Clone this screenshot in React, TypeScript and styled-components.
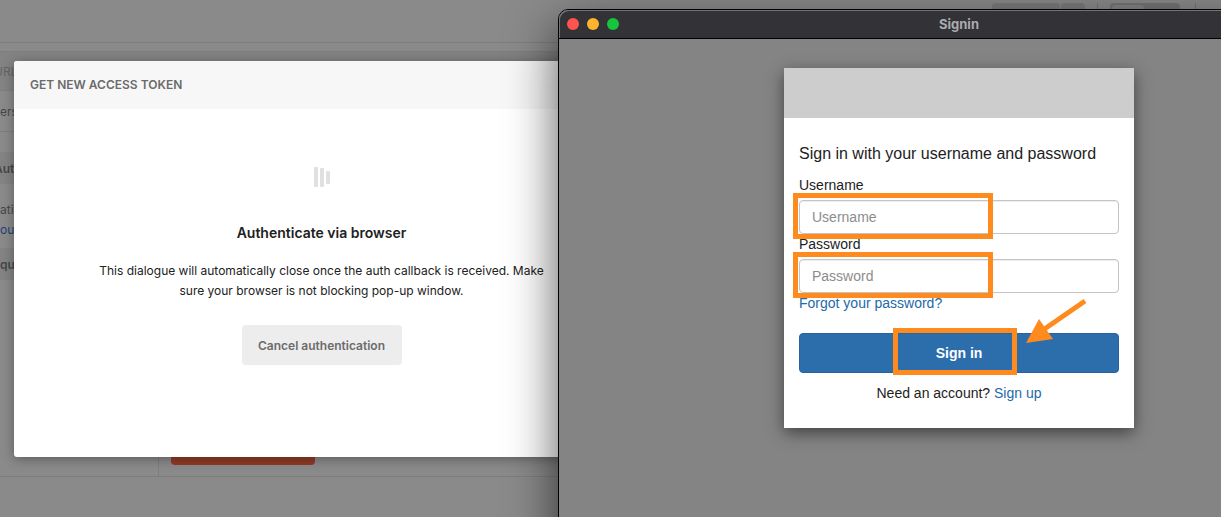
import React from "react";
import styled, { createGlobalStyle } from "styled-components";

const inter = `Inter, "Liberation Sans", sans-serif`;
const arial = `"Liberation Sans", Arial, sans-serif`;
const line = "#7e7e7e";
const marker = "#ff8a1e";

const GlobalStyle = createGlobalStyle`
  *, *::before, *::after { box-sizing: border-box; }
  body { margin: 0; background: #8a8a8a; }
  button, input { font: inherit; margin: 0; }
`;

const Desktop = styled.div`
  position: relative;
  display: flex;
  flex-direction: column;
  min-height: 100vh;
  overflow: hidden;
  font-family: ${inter};
  font-size: 12px;
  background: #8a8a8a;
`;

/* Dimmed application behind the dialog */
const TopBar = styled.header`
  display: flex;
  justify-content: flex-end;
  gap: 12px;
  height: 43px;
  padding: 3px 25px 0 0;
  border-bottom: 1px solid ${line};
`;

const SplitButton = styled.div`
  display: flex;
  gap: 1px;
  height: 28px;
`;

const Segment = styled.span<{ $width: number }>`
  width: ${(p) => p.$width}px;
  border-radius: 4px;
  background: #7b7b7b;
`;

const Toggle = styled.div`
  width: 70px;
  height: 28px;
  margin-right: 3px;
  padding: 2px;
  border-radius: 4px;
  background: #757575;
`;

const ToggleThumb = styled.div`
  width: 32px;
  height: 24px;
  border-radius: 3px;
  background: #838383;
`;

const Divider = styled.span`
  width: 1px;
  height: 28px;
  background: #757575;
`;

const Row = styled.div<{ $height: number; $shade?: boolean; $line?: boolean }>`
  display: flex;
  align-items: center;
  height: ${(p) => p.$height}px;
  background: ${(p) => (p.$shade ? "#838383" : "transparent")};
  border-bottom: ${(p) => (p.$line ? `1px solid ${line}` : "none")};
`;

const Clipped = styled.span<{ $color?: string; $bold?: boolean; $cut?: boolean }>`
  margin-left: ${(p) => (p.$cut ? "-6px" : "0")};
  white-space: nowrap;
  color: ${(p) => p.$color ?? "#474747"};
  font-weight: ${(p) => (p.$bold ? 600 : 400)};
`;

const Columns = styled.div`
  display: flex;
  height: 345px;
  border-bottom: 1px solid ${line};
`;

const Side = styled.div`
  width: 159px;
  padding-top: 20px;
  border-right: 1px solid ${line};
`;

const Note = styled.div`
  display: flex;
  flex-direction: column;
  height: 64px;
  padding-top: 16px;
  line-height: 20px;
`;

const Main = styled.div`
  flex: 1;
  display: flex;
  align-items: flex-end;
  padding: 0 12px 11px;
`;

const OrangeBlock = styled.div`
  width: 144px;
  height: 32px;
  border-radius: 4px;
  background: #8e3c26;
`;

/* Token dialog */
const Dialog = styled.section`
  position: absolute;
  top: 61px;
  left: 14px;
  width: 615px;
  height: 396px;
  border-radius: 3px;
  background: #fff;
  box-shadow: 0 2px 12px rgba(0, 0, 0, 0.35);
`;

const DialogHead = styled.h1`
  height: 48px;
  margin: 0;
  padding: 0 16px;
  border-radius: 3px 3px 0 0;
  background: #f7f7f7;
  color: #6b6b6b;
  font-size: 12px;
  font-weight: 600;
  line-height: 48px;
`;

const DialogBody = styled.div`
  display: flex;
  flex-direction: column;
  align-items: center;
  padding-top: 56px;
  color: #212121;
  text-align: center;
`;

const Loader = styled.svg`
  display: block;
  width: 18px;
  height: 24px;
`;

const DialogTitle = styled.h2`
  margin: 34px 0 18px;
  font-size: 14px;
  font-weight: 600;
  line-height: 20px;
`;

const Message = styled.p`
  width: 460px;
  margin: 0 0 24px;
  line-height: 20px;
`;

const CancelButton = styled.button`
  width: 160px;
  height: 40px;
  border: 0;
  border-radius: 4px;
  background: #ededed;
  color: #6b6b6b;
  font-weight: 600;
`;

/* Sign-in window */
const Window = styled.section`
  position: absolute;
  top: 9px;
  bottom: -80px;
  left: 558px;
  width: 802px;
  border: 1px solid #000;
  border-radius: 10px;
  background: #848484;
  box-shadow: 0 18px 50px rgba(0, 0, 0, 0.65);
  font-family: ${arial};
  font-size: 14px;
  line-height: 20px;
  color: #222;
`;

const TitleBar = styled.header`
  display: grid;
  grid-template-columns: 1fr auto 1fr;
  align-items: center;
  height: 29px;
  padding: 0 8px;
  border-bottom: 1px solid #000;
  border-radius: 9px 9px 0 0;
  background: #333237;
  box-shadow: inset 1px 1px 0 #737277;
`;

const Lights = styled.div`
  display: flex;
  gap: 8px;
`;

const Light = styled.span<{ $color: string }>`
  width: 12px;
  height: 12px;
  border-radius: 50%;
  background: ${(p) => p.$color};
`;

const WindowTitle = styled.h2`
  margin: 0;
  color: #acabb0;
  font-family: ${inter};
  font-size: 13px;
  font-weight: 700;
`;

const WindowBody = styled.div`
  display: flex;
  justify-content: center;
  padding-top: 29px;
`;

const Card = styled.div`
  width: 350px;
  background: #fff;
  box-shadow: 0 5px 15px rgba(0, 0, 0, 0.5);
`;

const Banner = styled.div`
  height: 50px;
  background: #cdcdcd;
`;

const Form = styled.form`
  display: flex;
  flex-direction: column;
  padding: 26px 15px 25px;
`;

const Intro = styled.p`
  margin: 0 0 11px;
  font-size: 16px;
`;

const Label = styled.label`
  margin-bottom: 5px;
`;

const Marked = styled.div`
  position: relative;
  display: flex;
`;

const Input = styled.input`
  flex: 1;
  height: 34px;
  padding: 6px 12px;
  border: 1px solid #c4c4c4;
  border-radius: 4px;
  background: #fff;
  box-shadow: inset 0 1px 1px rgba(0, 0, 0, 0.075);
  &::placeholder { color: #8c8c8c; opacity: 1; }
`;

const Link = styled.a`
  color: #2469a8;
  text-decoration: none;
`;

const Submit = styled.button`
  flex: 1;
  height: 40px;
  border: 1px solid #2763a0;
  border-radius: 4px;
  background: #2c6dac;
  color: #fff;
  font-weight: 700;
`;

const SubmitRow = styled(Marked)`
  margin: 20px 0 10px;
`;

const SignUp = styled.p`
  margin: 0;
  text-align: center;
`;

const FieldMark = styled.span`
  position: absolute;
  top: -7px;
  left: -6px;
  width: 200px;
  height: 46px;
  border: 5px solid ${marker};
  pointer-events: none;
`;

const SubmitMark = styled(FieldMark)`
  top: -5px;
  left: 94px;
  width: 124px;
  height: 47px;
`;

const Arrow = styled.svg`
  position: absolute;
  top: -36px;
  right: 30px;
  width: 64px;
  height: 50px;
  pointer-events: none;
`;

export default function App() {
  return (
    <Desktop>
      <GlobalStyle />
      <TopBar>
        <SplitButton>
          <Segment $width={68} />
          <Segment $width={24} />
        </SplitButton>
        <Divider />
        <Toggle>
          <ToggleThumb />
        </Toggle>
        <Divider />
      </TopBar>
      <Row $height={9} $line />
      <Row $height={39} $shade $line>
        <Clipped $color="#636363" $cut>URL</Clipped>
      </Row>
      <Row $height={41} $line>
        <Clipped>ers</Clipped>
      </Row>
      <Columns>
        <Side>
          <Row $height={32} $shade>
            <Clipped $bold $cut>Aut</Clipped>
          </Row>
          <Note>
            <Clipped>atic</Clipped>
            <Clipped $color="#1e3f78">ou</Clipped>
          </Note>
          <Row $height={32} $shade>
            <Clipped $bold>qu</Clipped>
          </Row>
        </Side>
        <Main>
          <OrangeBlock />
        </Main>
      </Columns>

      <Dialog role="dialog">
        <DialogHead>GET NEW ACCESS TOKEN</DialogHead>
        <DialogBody>
          <Loader viewBox="0 0 18 24" fill="#e0e0e0" aria-hidden>
            <rect x="1" y="2" width="4" height="20" rx="1" />
            <rect x="7" y="3" width="4" height="19" rx="1" />
            <rect x="13" y="6" width="4" height="13" rx="1" />
          </Loader>
          <DialogTitle>Authenticate via browser</DialogTitle>
          <Message>
            This dialogue will automatically close once the auth callback is
            received. Make sure your browser is not blocking pop-up window.
          </Message>
          <CancelButton type="button">Cancel authentication</CancelButton>
        </DialogBody>
      </Dialog>

      <Window>
        <TitleBar>
          <Lights>
            <Light $color="#ff5350" />
            <Light $color="#ffb32f" />
            <Light $color="#16c43e" />
          </Lights>
          <WindowTitle>Signin</WindowTitle>
        </TitleBar>
        <WindowBody>
          <Card>
            <Banner />
            <Form onSubmit={(e) => e.preventDefault()}>
              <Intro>Sign in with your username and password</Intro>
              <Label htmlFor="username">Username</Label>
              <Marked>
                <Input id="username" type="text" placeholder="Username" />
                <FieldMark />
              </Marked>
              <Label htmlFor="password">Password</Label>
              <Marked>
                <Input id="password" type="password" placeholder="Password" />
                <FieldMark />
              </Marked>
              <Link href="#forgot">Forgot your password?</Link>
              <SubmitRow>
                <Submit type="submit">Sign in</Submit>
                <SubmitMark />
                <Arrow viewBox="0 0 64 50" aria-hidden>
                  <path d="M60 4 L18 33" stroke={marker} strokeWidth="5" fill="none" />
                  <path d="M1 46 L14 22 L28 42 Z" fill={marker} />
                </Arrow>
              </SubmitRow>
              <SignUp>
                Need an account? <Link href="#signup">Sign up</Link>
              </SignUp>
            </Form>
          </Card>
        </WindowBody>
      </Window>
    </Desktop>
  );
}
